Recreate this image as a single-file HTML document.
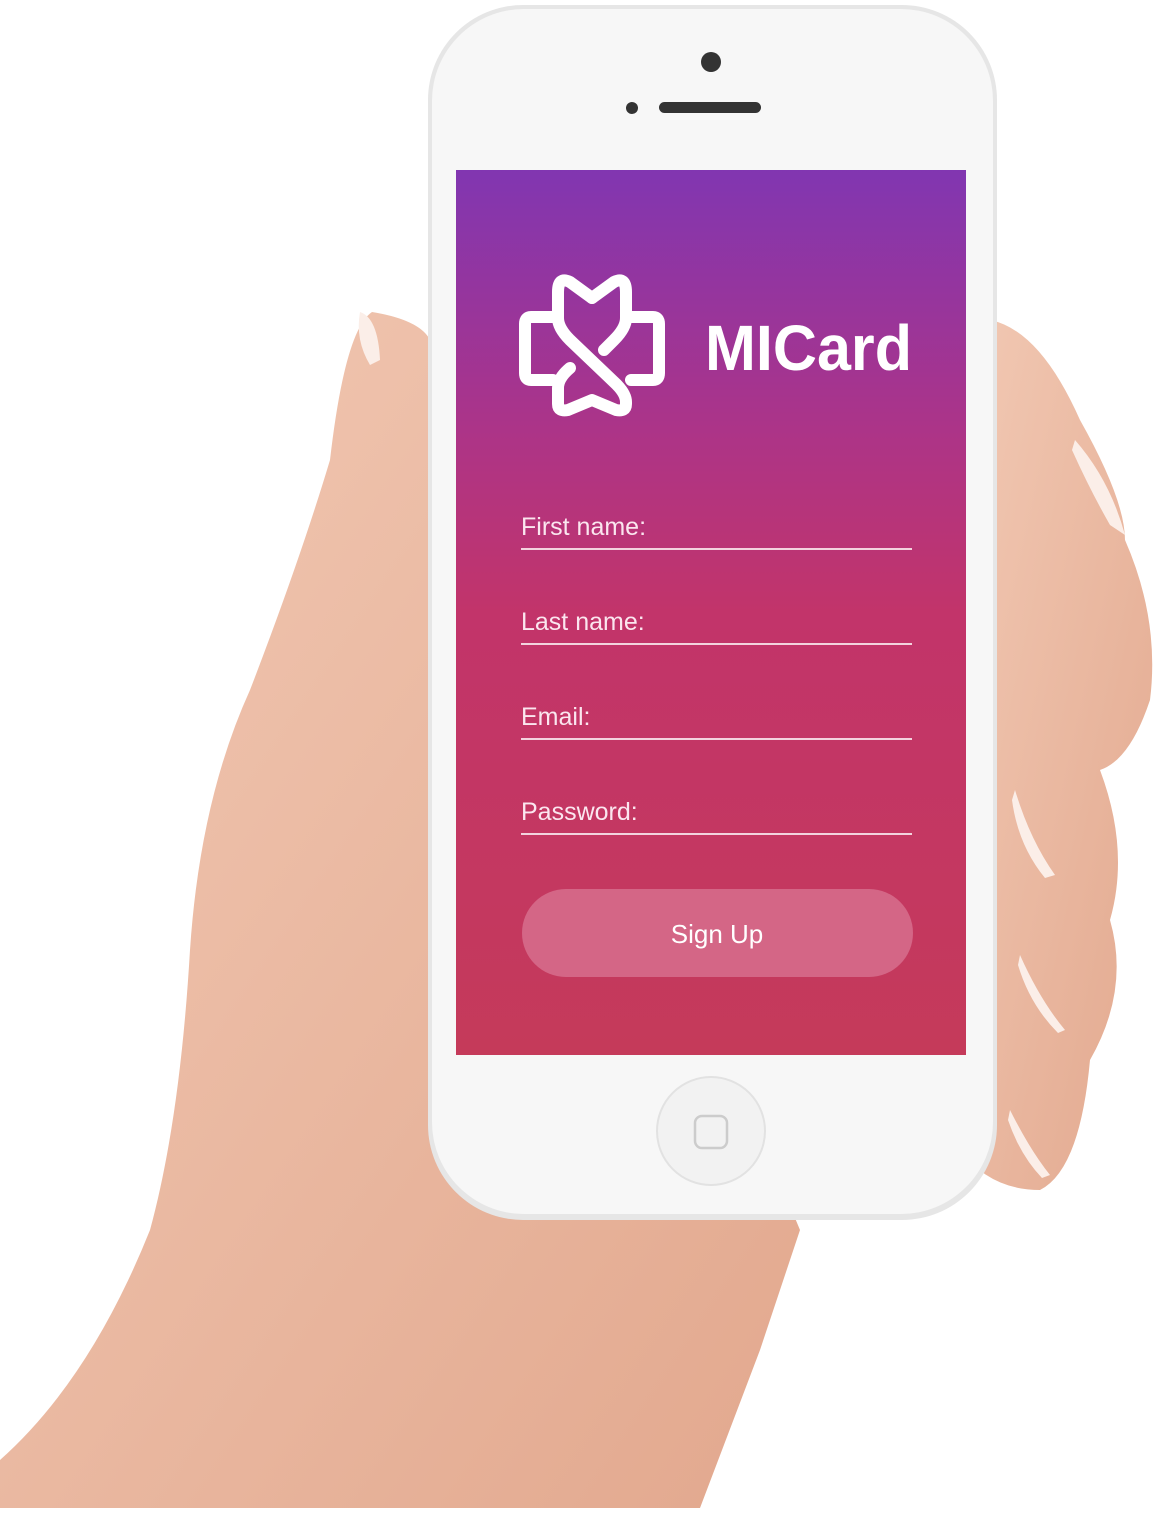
<!DOCTYPE html>
<html><head><style>
body{margin:0;background:#fff;width:1156px;height:1508px;overflow:hidden;font-family:"Liberation Sans",sans-serif}
</style></head><body>
<svg width="1156" height="1508" viewBox="0 0 1156 1508" xmlns="http://www.w3.org/2000/svg">
<defs>
<linearGradient id="sc" x1="0" y1="0" x2="0" y2="1">
<stop offset="0" stop-color="#8136b1"/>
<stop offset="0.3" stop-color="#ad3487"/>
<stop offset="0.5" stop-color="#c2346a"/>
<stop offset="1" stop-color="#c53a5a"/>
</linearGradient>
<linearGradient id="sk" x1="0" y1="0" x2="1" y2="1">
<stop offset="0" stop-color="#f2c9b4"/>
<stop offset="1" stop-color="#e2a88e"/>
</linearGradient>
</defs>
<path d="M372 312 Q420 320 430 340 L800 1230 L760 1350 L700 1508 L0 1508 L0 1460 Q90 1380 150 1230 Q180 1120 190 950 Q200 800 250 690 Q300 560 330 460 Q345 330 372 312 Z" fill="url(#sk)"/>
<path d="M990 320 Q1040 330 1080 420 Q1125 500 1125 540 Q1160 620 1150 700 Q1130 760 1100 770 Q1130 850 1110 920 Q1130 990 1090 1060 Q1080 1170 1040 1190 Q990 1190 960 1150 L990 330 Z" fill="url(#sk)"/>
<path d="M360 312 Q378 318 380 360 L370 365 Q355 340 360 312Z" fill="#fbeee8"/>
<path d="M1075 440 Q1110 480 1125 535 L1110 525 Q1090 490 1072 450Z" fill="#fbeee8"/>
<path d="M1015 790 Q1030 840 1055 875 L1045 878 Q1018 845 1012 800Z" fill="#fbeee8"/>
<path d="M1020 955 Q1040 1000 1065 1030 L1058 1033 Q1030 1005 1018 965Z" fill="#fbeee8"/>
<path d="M1010 1110 Q1030 1150 1050 1175 L1042 1178 Q1020 1155 1008 1120Z" fill="#fbeee8"/>
<rect x="428" y="5" width="569" height="1215" rx="95" fill="#e6e6e6"/>
<rect x="432" y="9" width="561" height="1205" rx="92" fill="#f7f7f7"/>
<rect x="456" y="170" width="510" height="885" fill="url(#sc)"/>
<circle cx="711" cy="62" r="10" fill="#333"/>
<circle cx="632" cy="108" r="6" fill="#333"/>
<rect x="659" y="102" width="102" height="11" rx="5.5" fill="#333"/>
<circle cx="711" cy="1131" r="54" fill="#f2f2f2" stroke="#e2e2e2" stroke-width="2"/>
<rect x="695" y="1116" width="32" height="32" rx="7" fill="none" stroke="#ccc" stroke-width="2.5"/>
<g fill="none" stroke="#fff" stroke-width="12" stroke-linejoin="round" stroke-linecap="round">
<path d="M553 317 L531 317 Q525 317 525 324 L525 373 Q525 380 531 380 L553 380"/>
<path d="M631 317 L653 317 Q659 317 659 324 L659 373 Q659 380 653 380 L631 380"/>
<path d="M592 298 L570 282 Q558 276 558 292 L558 318 Q558 328 570 340 L614 382 Q626 393 626 402 L626 404 Q626 412 616 410 L592 400 L568 410 Q558 412 558 404 L558 388 Q558 378 570 368"/>
<path d="M592 298 L614 282 Q626 276 626 292 L626 318 Q626 328 614 340 L604 350"/>
</g>
<text x="705" y="370" font-size="64" font-weight="bold" fill="#fff" textLength="207" lengthAdjust="spacingAndGlyphs" font-family="Liberation Sans,sans-serif">MICard</text>
<g font-size="25" fill="#fbe6ef" font-family="Liberation Sans,sans-serif">
<text x="521" y="535">First name:</text>
<text x="521" y="630">Last name:</text>
<text x="521" y="725">Email:</text>
<text x="521" y="820">Password:</text>
</g>
<g stroke="#f3d3de" stroke-width="2">
<line x1="521" y1="549" x2="912" y2="549"/>
<line x1="521" y1="644" x2="912" y2="644"/>
<line x1="521" y1="739" x2="912" y2="739"/>
<line x1="521" y1="834" x2="912" y2="834"/>
</g>
<rect x="522" y="889" width="391" height="88" rx="44" fill="#d46686"/>
<text x="717" y="943" font-size="26" fill="#fff" text-anchor="middle">Sign Up</text>
</svg>
</body></html>
